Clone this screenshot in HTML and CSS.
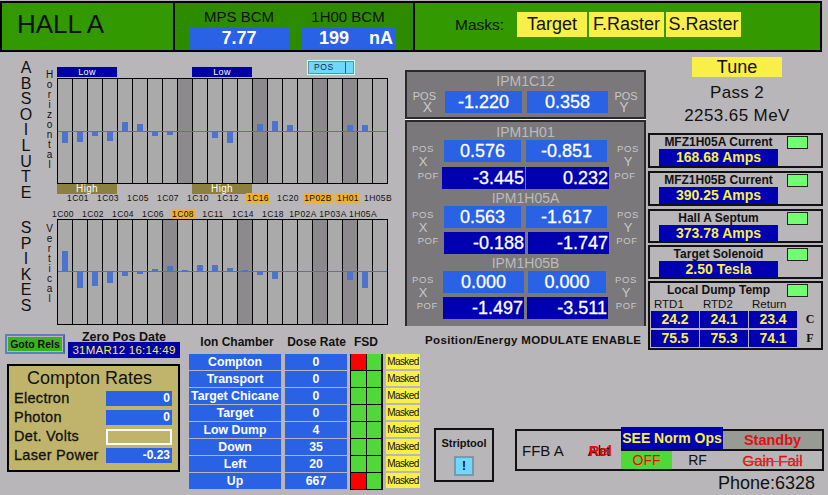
FILE: index.html
```html
<!DOCTYPE html>
<html lang="en">
<head>
    <meta charset="UTF-8">
    <title>Hall A</title>
    <link rel="stylesheet" href="styles.css">
</head>
<body>
<div class="screen">

    <!-- Top bar -->
    <div class="header">
        <div class="hall-name">HALL A</div>
        <div class="bcm">
            <div class="bcm-item">
                <div class="bcm-label">MPS BCM</div>
                <div class="bcm-value">7.77</div>
            </div>
            <div class="bcm-item bcm-item-na">
                <div class="bcm-label">1H00 BCM</div>
                <div class="bcm-value"><span class="bcm-num">199</span><span class="bcm-unit">nA</span></div>
            </div>
        </div>
        <div class="masks">
            <span class="masks-label">Masks:</span>
            <span class="mask mask-target">Target</span>
            <span class="mask mask-fast">F.Raster</span>
            <span class="mask mask-slow">S.Raster</span>
        </div>
    </div>

    <div class="main">

        <!-- Bar charts -->
        <div class="charts">
            <div class="beam">
                <div class="big-rail big-rail-top">A<br>B<br>S<br>O<br>I<br>L<br>U<br>T<br>E</div>
                <div class="small-rail small-rail-top">H<br>o<br>r<br>i<br>z<br>o<br>n<br>t<br>a<br>l</div>
                <div class="beam-body">
                    <div class="limit-row limit-low"><span>Low</span><span>Low</span></div>
                    <div class="pos-toggle"><span>POS</span><i></i></div>
                    <svg class="chart" width="331" height="106" viewBox="0 0 331 106">
                        <defs>
                            <pattern id="cols" width="15" height="106" patternUnits="userSpaceOnUse">
                                <rect width="15" height="106" fill="#aaaaaa"/>
                                <rect width="1" height="106" fill="#000"/>
                            </pattern>
                        </defs>
                        <rect width="331" height="106" fill="url(#cols)"/>
                        <g class="dead">
                            <rect x="121" width="14" height="106"/>
                            <rect x="196" width="14" height="106"/>
                            <rect x="256" width="14" height="106"/>
                            <rect x="286" width="14" height="106"/>
                        </g>
                        <g class="bars">
                            <rect x="5" y="53" width="6" height="12"/>
                            <rect x="20" y="53" width="6" height="11"/>
                            <rect x="35" y="53" width="6" height="5"/>
                            <rect x="50" y="53" width="6" height="10"/>
                            <rect x="65" y="44" width="6" height="9"/>
                            <rect x="80" y="46" width="6" height="7"/>
                            <rect x="95" y="53" width="6" height="5"/>
                            <rect x="110" y="53" width="6" height="4"/>
                            <rect x="155" y="53" width="6" height="7"/>
                            <rect x="170" y="53" width="6" height="12"/>
                            <rect x="200" y="46" width="6" height="7"/>
                            <rect x="215" y="43" width="6" height="10"/>
                            <rect x="230" y="47" width="6" height="6"/>
                            <rect x="290" y="47" width="6" height="6"/>
                            <rect x="305" y="47" width="6" height="6"/>
                            <rect y="53" width="331" height="1"/>
                        </g>
                        <rect class="frame" x=".5" y=".5" width="330" height="105"/>
                    </svg>
                    <div class="limit-row limit-high"><span>High</span><span>High</span></div>
                    <div class="tags tags-top">
                        <span>1C01</span><span>1C03</span><span>1C05</span><span>1C07</span><span>1C10</span><span>1C12</span>
                        <span><b>1C16</b></span><span>1C20</span><span><b>1P02B</b></span><span><b>1H01</b></span><span>1H05B</span>
                    </div>
                </div>
            </div>

            <div class="beam beam-lower">
                <div class="big-rail big-rail-low">S<br>P<br>I<br>K<br>E<br>S</div>
                <div class="small-rail small-rail-low">V<br>e<br>r<br>t<br>i<br>c<br>a<br>l</div>
                <div class="beam-body">
                    <div class="tags tags-low">
                        <span>1C00</span><span>1C02</span><span>1C04</span><span>1C06</span><span><b>1C08</b></span><span>1C11</span>
                        <span>1C14</span><span>1C18</span><span>1P02A</span><span>1P03A</span><span>1H05A</span>
                    </div>
                    <svg class="chart" width="331" height="106" viewBox="0 0 331 106">
                        <rect width="331" height="106" fill="url(#cols)"/>
                        <g class="dead">
                            <rect x="106" width="14" height="106"/>
                            <rect x="181" width="14" height="106"/>
                            <rect x="256" width="14" height="106"/>
                            <rect x="286" width="14" height="106"/>
                        </g>
                        <g class="bars">
                            <rect x="5" y="32" width="6" height="20"/>
                            <rect x="20" y="52" width="6" height="17"/>
                            <rect x="35" y="52" width="6" height="15"/>
                            <rect x="50" y="52" width="6" height="12"/>
                            <rect x="65" y="52" width="6" height="5"/>
                            <rect x="80" y="52" width="6" height="3"/>
                            <rect x="95" y="50" width="6" height="2"/>
                            <rect x="110" y="47" width="6" height="5"/>
                            <rect x="125" y="51" width="6" height="1"/>
                            <rect x="140" y="46" width="6" height="6"/>
                            <rect x="155" y="46" width="6" height="6"/>
                            <rect x="170" y="49" width="6" height="3"/>
                            <rect x="185" y="51" width="6" height="1"/>
                            <rect x="200" y="52" width="6" height="4"/>
                            <rect x="215" y="52" width="6" height="8"/>
                            <rect x="290" y="52" width="6" height="9"/>
                            <rect x="305" y="52" width="6" height="17"/>
                            <rect y="52" width="331" height="1"/>
                        </g>
                        <rect class="frame" x=".5" y=".5" width="330" height="105"/>
                    </svg>
                </div>
            </div>
        </div>

        <!-- IPM readbacks -->
        <div class="ipm">
            <div class="ipm-panel ipm-panel-first">
                <div class="ipm-title">IPM1C12</div>
                <div class="ipm-row ipm-row-first">
                    <div class="ipm-axis big"><span>POS</span><em>X</em></div>
                    <div class="val">-1.220</div>
                    <div class="val">0.358</div>
                    <div class="ipm-axis big"><span>POS</span><em>Y</em></div>
                </div>
            </div>
            <div class="ipm-panel">
                <div class="ipm-group">
                    <div class="ipm-title">IPM1H01</div>
                    <div class="ipm-row">
                        <div class="ipm-axis"><span>POS</span><em>X</em></div>
                        <div class="val">0.576</div>
                        <div class="val">-0.851</div>
                        <div class="ipm-axis"><span>POS</span><em>Y</em></div>
                    </div>
                    <div class="ipm-row ipm-row-pof ipm-row-pof-a">
                        <div class="ipm-axis"><span>POF</span></div>
                        <div class="val dark">-3.445</div>
                        <div class="val dark">0.232</div>
                        <div class="ipm-axis"><span>POF</span></div>
                    </div>
                </div>
                <div class="ipm-group">
                    <div class="ipm-title">IPM1H05A</div>
                    <div class="ipm-row">
                        <div class="ipm-axis"><span>POS</span><em>X</em></div>
                        <div class="val">0.563</div>
                        <div class="val">-1.617</div>
                        <div class="ipm-axis"><span>POS</span><em>Y</em></div>
                    </div>
                    <div class="ipm-row ipm-row-pof">
                        <div class="ipm-axis"><span>POF</span></div>
                        <div class="val dark">-0.188</div>
                        <div class="val dark">-1.747</div>
                        <div class="ipm-axis"><span>POF</span></div>
                    </div>
                </div>
                <div class="ipm-group">
                    <div class="ipm-title">IPM1H05B</div>
                    <div class="ipm-row ipm-row-wide">
                        <div class="ipm-axis"><span>POS</span><em>X</em></div>
                        <div class="val">0.000</div>
                        <div class="val">0.000</div>
                        <div class="ipm-axis"><span>POS</span><em>Y</em></div>
                    </div>
                    <div class="ipm-row ipm-row-pof ipm-row-pof-b">
                        <div class="ipm-axis"><span>POF</span></div>
                        <div class="val dark">-1.497</div>
                        <div class="val dark">-3.511</div>
                        <div class="ipm-axis"><span>POF</span></div>
                    </div>
                </div>
            </div>
            <div class="modulate">Position/Energy MODULATE ENABLE</div>
        </div>

        <!-- Magnets and dump temperature -->
        <div class="status">
            <div class="tune">Tune</div>
            <div class="pass">Pass 2</div>
            <div class="energy">2253.65 MeV</div>

            <div class="mag">
                <div class="mag-text">
                    <div class="mag-label">MFZ1H05A Current</div>
                    <div class="mag-value">168.68 Amps</div>
                </div>
                <div class="led"></div>
            </div>
            <div class="mag">
                <div class="mag-text">
                    <div class="mag-label">MFZ1H05B Current</div>
                    <div class="mag-value">390.25 Amps</div>
                </div>
                <div class="led"></div>
            </div>
            <div class="mag mag-short">
                <div class="mag-text">
                    <div class="mag-label">Hall A Septum</div>
                    <div class="mag-value">373.78 Amps</div>
                </div>
                <div class="led"></div>
            </div>
            <div class="mag mag-short">
                <div class="mag-text">
                    <div class="mag-label">Target Solenoid</div>
                    <div class="mag-value">2.50 Tesla</div>
                </div>
                <div class="led"></div>
            </div>
            <div class="mag dump">
                <div class="mag-text">
                    <div class="mag-label">Local Dump Temp</div>
                </div>
                <div class="led"></div>
                <div class="rtd">
                    <span class="rtd-head">RTD1</span><span class="rtd-head">RTD2</span><span class="rtd-head">Return</span><span></span>
                    <span class="rtd-val">24.2</span><span class="rtd-val">24.1</span><span class="rtd-val">23.4</span><span class="rtd-unit">C</span>
                    <span class="rtd-val">75.5</span><span class="rtd-val">75.3</span><span class="rtd-val">74.1</span><span class="rtd-unit">F</span>
                </div>
            </div>
        </div>

        <!-- Lower left: rates and ion chambers -->
        <div class="lower-left">
            <div class="side">
                <div class="side-top">
                    <div class="goto"><span>Goto Rels</span></div>
                    <div class="zero">
                        <div class="zero-label">Zero Pos Date</div>
                        <div class="zero-date">31MAR12 16:14:49</div>
                    </div>
                </div>
                <div class="compton">
                    <div class="compton-title">Compton Rates</div>
                    <div class="compton-row"><span>Electron</span><div class="compton-val">0</div></div>
                    <div class="compton-row"><span>Photon</span><div class="compton-val">0</div></div>
                    <div class="compton-row"><span>Det. Volts</span><div class="compton-val compton-empty"></div></div>
                    <div class="compton-row"><span>Laser Power</span><div class="compton-val">-0.23</div></div>
                </div>
            </div>

            <div class="ion">
                <div class="ion-head">
                    <span>Ion Chamber</span><span>Dose Rate</span><span>FSD</span>
                </div>
                <div class="ion-table">
                    <div class="ion-cell">Compton</div><div class="ion-cell">0</div>
                    <div class="fsd"><i class="bad"></i><i></i></div><div class="masked">Masked</div>
                    <div class="ion-cell">Transport</div><div class="ion-cell">0</div>
                    <div class="fsd"><i></i><i></i></div><div class="masked">Masked</div>
                    <div class="ion-cell">Target Chicane</div><div class="ion-cell">0</div>
                    <div class="fsd"><i></i><i></i></div><div class="masked">Masked</div>
                    <div class="ion-cell">Target</div><div class="ion-cell">0</div>
                    <div class="fsd"><i></i><i></i></div><div class="masked">Masked</div>
                    <div class="ion-cell">Low Dump</div><div class="ion-cell">4</div>
                    <div class="fsd"><i></i><i></i></div><div class="masked">Masked</div>
                    <div class="ion-cell">Down</div><div class="ion-cell">35</div>
                    <div class="fsd"><i></i><i></i></div><div class="masked">Masked</div>
                    <div class="ion-cell">Left</div><div class="ion-cell">20</div>
                    <div class="fsd"><i></i><i></i></div><div class="masked">Masked</div>
                    <div class="ion-cell">Up</div><div class="ion-cell">667</div>
                    <div class="fsd"><i class="bad"></i><i></i></div><div class="masked">Masked</div>
                </div>
            </div>
        </div>

        <!-- Lower right: striptool and FFB -->
        <div class="lower-right">
            <div class="strip">
                <div class="strip-label">Striptool</div>
                <div class="strip-btn">!</div>
            </div>
            <div class="ffb-wrap">
                <div class="ffb">
                    <div class="ffb-name">
                        <span>FFB A</span>
                        <div class="ffb-state"><span class="under">Abt</span><span class="over">Rel</span></div>
                    </div>
                    <div class="ffb-see">SEE Norm Ops</div>
                    <div class="ffb-standby">Standby</div>
                    <div class="ffb-off">OFF</div>
                    <div class="ffb-rf">RF</div>
                    <div class="ffb-gain">Gain Fail</div>
                </div>
                <div class="phone">Phone:6328</div>
            </div>
        </div>
    </div>
</div>
</body>
</html>
```

FILE: styles.css
```css
/* EDM style control screen, fixed window size */
html, body {
    margin: 0;
    padding: 0;
    background-color: #b9b6b9;
}

.screen {
    width: 828px;
    height: 495px;
    overflow: hidden;
    font-family: "Liberation Sans", Arial, sans-serif;
    color: #111;
    box-sizing: border-box;
    padding-top: 1px;
}

/* Top bar */
.header {
    display: flex;
    width: 822px;
    height: 51px;
    box-sizing: border-box;
    border: 2px solid #000;
    background-color: #000;
    gap: 2px;
}

.hall-name {
    width: 171px;
    background-color: #339900;
    font-size: 26px;
    line-height: 43px;
    padding-left: 15px;
    box-sizing: border-box;
}

.bcm {
    width: 238px;
    background-color: #2d8b00;
    display: flex;
    padding-left: 14px;
    box-sizing: border-box;
}

.bcm-item {
    width: 100px;
    margin-right: 12px;
    text-align: center;
}

.bcm-item-na {
    width: 94px;
    margin-right: 0;
}

.bcm-label {
    font-size: 15px;
    line-height: 16px;
    padding-top: 6px;
    height: 17px;
}

.bcm-value {
    background-color: #2a62e6;
    color: #fff;
    font-size: 18px;
    font-weight: bold;
    height: 22px;
    line-height: 22px;
    margin-top: 1px;
    display: flex;
    justify-content: center;
}

.bcm-num {
    width: 66px;
}

.bcm-unit {
    width: 28px;
}

.masks {
    flex: 1;
    background-color: #339900;
    display: flex;
    align-items: center;
    padding-left: 40px;
    padding-bottom: 4px;
    box-sizing: border-box;
}

.masks-label {
    font-size: 15.5px;
    width: 62px;
}

.mask {
    background-color: #f8f048;
    font-size: 18px;
    height: 25px;
    line-height: 25px;
    text-align: center;
    margin-right: 2px;
}

.mask-target { width: 70px; }
.mask-fast { width: 75px; }
.mask-slow { width: 75px; }

/* Main layout */
.main {
    display: grid;
    grid-template-columns: 400px 248px 180px;
    grid-template-rows: 281px 20px 1fr;
    height: 443px;
}

.charts {
    grid-column: 1;
    grid-row: 1;
    padding-top: 15px;
}

.ipm {
    grid-column: 2;
    grid-row: 1 / 3;
    padding: 18px 2px 0 5px;
}

.status {
    grid-column: 3;
    grid-row: 1 / 3;
    padding-top: 5px;
}

.lower-left {
    grid-column: 1;
    grid-row: 2 / 4;
    width: 425px;
    display: flex;
}

.lower-right {
    grid-column: 2 / 4;
    grid-row: 3;
    display: flex;
    padding: 75px 0 0 34px;
    gap: 21px;
}

/* Charts */
.beam {
    display: grid;
    grid-template-columns: 10px 32px 15px 331px;
}

.beam-lower {
    margin-top: 7px;
}

.beam-body {
    grid-column: 4;
    position: relative;
}

.big-rail {
    grid-column: 2;
    font-size: 16px;
    line-height: 15.6px;
    text-align: center;
}

.big-rail-top { margin-top: -7px; }
.big-rail-low { margin-top: 10px; }

.small-rail {
    grid-column: 3;
    font-size: 10px;
    line-height: 10px;
    text-align: center;
}

.small-rail-top { margin-top: 3px; }
.small-rail-low { margin-top: 14px; }

.chart {
    display: block;
}

.dead { fill: #8c8a8c; }
.bars { fill: #4d74cc; }

.frame {
    fill: none;
    stroke: #000;
}

.limit-row {
    display: flex;
    gap: 75px;
    height: 10px;
    line-height: 10px;
    font-size: 9px;
    color: #fff;
    text-align: center;
}

.limit-row span {
    width: 60px;
    letter-spacing: .3px;
}

.limit-low span { background-color: #0000a8; }
.limit-high span { background-color: #8c8040; font-size: 10px; }

.limit-low {
    margin-bottom: 1px;
}

.pos-toggle {
    position: absolute;
    left: 250px;
    top: -7px;
    width: 48px;
    height: 15px;
    box-sizing: border-box;
    border: 1px solid #c8ffff;
    outline: 1px solid #6a8a98;
    outline-offset: -2px;
    background-color: #70d8ff;
    font-size: 8.5px;
    line-height: 13px;
    letter-spacing: .6px;
    padding-left: 6px;
    color: #0a2a4a;
}

.pos-toggle i {
    position: absolute;
    right: 8px;
    top: 1px;
    width: 1px;
    height: 11px;
    background-color: #456;
}

.tags {
    display: grid;
    grid-template-columns: repeat(11, 30px);
    font-size: 8.5px;
    line-height: 8px;
    letter-spacing: .4px;
    text-align: center;
    height: 9px;
}

.tags-top { margin-left: 6px; }
.tags-low { margin-left: -9px; }

.tags b {
    background-color: #f0b030;
    font-weight: normal;
    padding: 0 1px;
}

/* IPM panels */
.ipm-panel {
    width: 241px;
    box-sizing: border-box;
    background-color: #7a787a;
    border: 2px solid #2a2a2a;
    border-bottom: 0;
    height: 206px;
    box-shadow: 0 -1px 0 #fff;
    margin-top: 1px;
}

.ipm-panel-first {
    height: 49px;
    margin-top: 0;
    border-bottom: 2px solid #2a2a2a;
    box-shadow: none;
}

.ipm-title {
    color: #bcbcbc;
    font-size: 14px;
    line-height: 18px;
    height: 17px;
    text-align: center;
}

.ipm-group:first-child .ipm-title {
    height: 18px;
    line-height: 20px;
}

.ipm-row {
    display: grid;
    grid-template-columns: 32px 77px 81px 32px;
    column-gap: 5px;
    height: 22px;
    margin-bottom: 4px;
}

.ipm-group:first-child .ipm-row {
    margin-bottom: 5px;
}

.ipm-group .ipm-row-pof,
.ipm-group:first-child .ipm-row-pof {
    margin-bottom: 0;
}

.ipm-row-first {
    margin-top: 2px;
    grid-template-columns: 33px 77px 81px 32px;
}

.ipm-row-pof {
    grid-template-columns: 34px 81px 81px 30px;
    column-gap: 3px;
}

.ipm-row-pof-a {
    grid-template-columns: 34px 83px 83px 30px;
    column-gap: 1px;
}

.ipm-row-pof-b {
    grid-template-columns: 33px 81px 81px 31px;
    column-gap: 3px;
}

.ipm-row-wide {
    grid-template-columns: 32px 81px 78px 32px;
    column-gap: 4px;
}

.ipm-axis {
    color: #c8c8c8;
    text-align: center;
    font-size: 9.5px;
    letter-spacing: .6px;
    line-height: 10px;
    padding-top: 4px;
    height: 18px;
}

.ipm-row-pof .ipm-axis:first-child {
    text-align: right;
    padding-right: 2px;
}

.ipm-axis.big {
    font-size: 11px;
    letter-spacing: 0;
    line-height: 10px;
    padding-top: 0;
}

.ipm-axis.big:first-child {
    text-align: right;
    padding-right: 4px;
}

.ipm-axis.big:last-child {
    margin-left: -6px;
}

.ipm-axis span {
    display: block;
}

.ipm-axis em {
    display: block;
    font-style: normal;
    font-size: 13px;
    line-height: 15px;
    letter-spacing: 0;
}

.ipm-axis.big em {
    font-size: 14px;
    line-height: 12px;
    padding-right: 4px;
}

.val {
    background-color: #2a62e6;
    color: #fff;
    font-size: 18px;
    line-height: 22px;
    text-align: center;
    -webkit-text-stroke: .3px #fff;
}

.val.dark {
    background-color: #0000b0;
    text-align: right;
    padding-right: 1px;
}

.modulate {
    font-size: 11.5px;
    font-weight: bold;
    letter-spacing: .35px;
    margin: 8px 0 0 20px;
    white-space: nowrap;
}

/* Right column */
.tune {
    width: 90px;
    height: 20px;
    margin-left: 44px;
    background-color: #f8f048;
    font-size: 18px;
    line-height: 20px;
    text-align: center;
}

.pass,
.energy {
    width: 178px;
    text-align: center;
    font-size: 17px;
    line-height: 23px;
    letter-spacing: .3px;
}

.pass { margin-top: 4px; }

.energy {
    margin-bottom: 6px;
    letter-spacing: .4px;
}

.mag {
    width: 175px;
    height: 35px;
    box-sizing: border-box;
    border: 2px solid #111;
    margin-bottom: 3px;
    display: grid;
    grid-template-columns: 128px 21px;
    column-gap: 9px;
    align-content: start;
}

.mag-short {
    height: 34px;
    margin-bottom: 2px;
}

.dump {
    height: 69px;
    margin-top: 1px;
}

.mag-text {
    padding-left: 9px;
    text-align: center;
}

.mag-label {
    font-size: 12px;
    font-weight: bold;
    line-height: 14px;
    white-space: nowrap;
    width: 119px;
}

.mag-value {
    width: 119px;
    height: 17px;
    background-color: #0000b0;
    color: #f8f048;
    font-size: 14px;
    font-weight: bold;
    line-height: 17px;
}

.led {
    height: 13px;
    margin-top: 1px;
    box-sizing: border-box;
    border: 1px solid #222;
    background-color: #70ff70;
}

.rtd {
    grid-column: 1 / 3;
    display: grid;
    grid-template-columns: 48px 48px 48px 24px;
    grid-template-rows: 12px 17px 17px;
    column-gap: 1px;
    row-gap: 2px;
    padding-left: 1px;
}

.rtd-head {
    font-size: 11.5px;
    line-height: 14px;
    padding-left: 3px;
}

.rtd-val {
    background-color: #0000b0;
    color: #f8f048;
    font-size: 14px;
    font-weight: bold;
    line-height: 17px;
    text-align: center;
}

.rtd-unit {
    font-family: "Liberation Serif", serif;
    font-weight: bold;
    font-size: 12px;
    line-height: 17px;
    text-align: center;
}

/* Lower left */
.side {
    width: 185px;
    padding-left: 5px;
    box-sizing: border-box;
}

.side-top {
    display: flex;
    gap: 3px;
}

.goto {
    width: 60px;
    height: 20px;
    margin-top: 1px;
    box-sizing: border-box;
    border: 2px solid #5a80c0;
    border-right-color: #4a68a0;
    padding: 1px;
}

.goto span {
    display: block;
    background-color: #3cb020;
    font-size: 10.5px;
    font-weight: bold;
    line-height: 14px;
    text-align: center;
}

.zero {
    width: 112px;
}

.zero-label {
    font-size: 12.5px;
    font-weight: bold;
    line-height: 9px;
    height: 9px;
    text-align: center;
}

.zero-date {
    background-color: #0000a8;
    color: #f8f048;
    font-size: 11.5px;
    line-height: 16px;
    letter-spacing: .25px;
    text-align: center;
    white-space: nowrap;
}

.compton {
    width: 173px;
    height: 108px;
    box-sizing: border-box;
    margin: 6px 0 0 2px;
    border: 2px solid #000;
    background-color: #c0b46c;
    padding-left: 5px;
}

.compton-title {
    font-size: 18px;
    line-height: 24px;
    height: 25px;
    padding-left: 13px;
}

.compton-row {
    display: flex;
    justify-content: space-between;
    font-size: 14.5px;
    line-height: 15px;
    letter-spacing: .3px;
    height: 15px;
    margin-bottom: 4px;
    padding-right: 6px;
    -webkit-text-stroke: .3px #111;
}

.compton-val {
    width: 66px;
    height: 15px;
    box-sizing: border-box;
    background-color: #2a62e6;
    color: #fff;
    font-size: 12px;
    font-weight: bold;
    text-align: right;
    padding-right: 2px;
    -webkit-text-stroke: 0;
    letter-spacing: 0;
}

.compton-empty {
    background: none;
    border: 2px solid #fff;
    height: 16px;
}

/* Ion chamber table */
.ion {
    padding: 2px 0 0 4px;
}

.ion-head {
    display: flex;
    font-size: 12px;
    font-weight: bold;
    line-height: 14px;
    height: 19px;
    white-space: nowrap;
}

.ion-head span:nth-child(1) {
    width: 96px;
    text-align: center;
}

.ion-head span:nth-child(2) {
    width: 63px;
    margin-right: 6px;
    text-align: center;
}

.ion-table {
    display: grid;
    grid-template-columns: 92px 62px 32px 33px;
    grid-auto-rows: 16px;
    column-gap: 4px;
    row-gap: 1px;
}

.ion-cell {
    background-color: #2a62e6;
    color: #fff;
    font-size: 12.3px;
    font-weight: bold;
    line-height: 16px;
    text-align: center;
    white-space: nowrap;
}

.fsd {
    display: grid;
    grid-template-columns: 15px 15px;
    margin-left: -1px;
    background-color: #000;
    box-shadow: 0 1px 0 #000;
    padding: 0 1px;
}

.fsd i {
    background-color: #50d838;
    border-left: 1px solid #000;
}

.fsd i:first-child {
    border-left: 0;
}

.fsd i.bad {
    background-color: #ff0000;
}

.masked {
    margin-left: -1px;
    background-color: #f8f048;
    font-size: 10px;
    line-height: 16px;
    height: 15px;
    letter-spacing: -.6px;
    text-align: center;
    white-space: nowrap;
}

/* Lower right */
.strip {
    width: 60px;
    height: 54px;
    box-sizing: border-box;
    border: 2px solid #111;
    text-align: center;
}

.strip-label {
    font-size: 11px;
    font-weight: bold;
    line-height: 14px;
    margin-top: 6px;
}

.strip-btn {
    width: 20px;
    height: 20px;
    margin: 6px auto 0;
    box-sizing: border-box;
    border: 2px solid #7a9aa8;
    background-color: #70d8ff;
    font-size: 12px;
    font-weight: bold;
    line-height: 16px;
}

.ffb-wrap {
    width: 309px;
    padding-top: 1px;
}

.ffb {
    height: 42px;
    box-sizing: border-box;
    border: 2px solid #111;
    display: grid;
    grid-template-columns: 104px 51px 51px 99px;
    grid-template-rows: 18px 2px 18px;
}

.ffb-name {
    grid-row: 1 / 4;
    display: flex;
    align-items: center;
    font-size: 15px;
    padding-left: 5px;
    box-sizing: border-box;
}

.ffb-state {
    display: grid;
    margin-left: 24px;
    font-size: 15px;
}

.ffb-state span {
    grid-area: 1 / 1;
}

.ffb-state .over {
    color: #f00;
    font-weight: bold;
    margin-left: 1px;
}

.ffb-see {
    grid-column: 2 / 4;
    grid-row: 1;
    margin-top: -4px;
    height: 22px;
    background-color: #0000b0;
    color: #f8f048;
    font-size: 14px;
    font-weight: bold;
    line-height: 22px;
    text-align: center;
    white-space: nowrap;
}

.ffb-standby {
    grid-column: 4;
    grid-row: 1;
    background-color: #989a94;
    color: #dd1111;
    font-size: 14.5px;
    font-weight: bold;
    line-height: 18px;
    text-align: center;
}

.ffb-off {
    grid-column: 2;
    grid-row: 3;
    background-color: #50d838;
    color: #f00;
    font-size: 14px;
    line-height: 19px;
    text-align: center;
}

.ffb-rf {
    grid-column: 3;
    grid-row: 3;
    font-size: 14px;
    line-height: 19px;
    text-align: center;
}

.ffb-gain {
    grid-column: 4;
    grid-row: 3;
    color: #dd1111;
    font-size: 15px;
    line-height: 19px;
    text-align: center;
    text-decoration: line-through;
    text-decoration-color: #3a8a2a;
    -webkit-text-stroke: .3px #dd1111;
}

/* divider between the FFB rows */
.ffb::after {
    content: "";
    grid-column: 2 / 5;
    grid-row: 2;
    background-color: #111;
}

.phone {
    font-size: 18px;
    line-height: 24px;
    text-align: right;
    padding-right: 9px;
}
```
